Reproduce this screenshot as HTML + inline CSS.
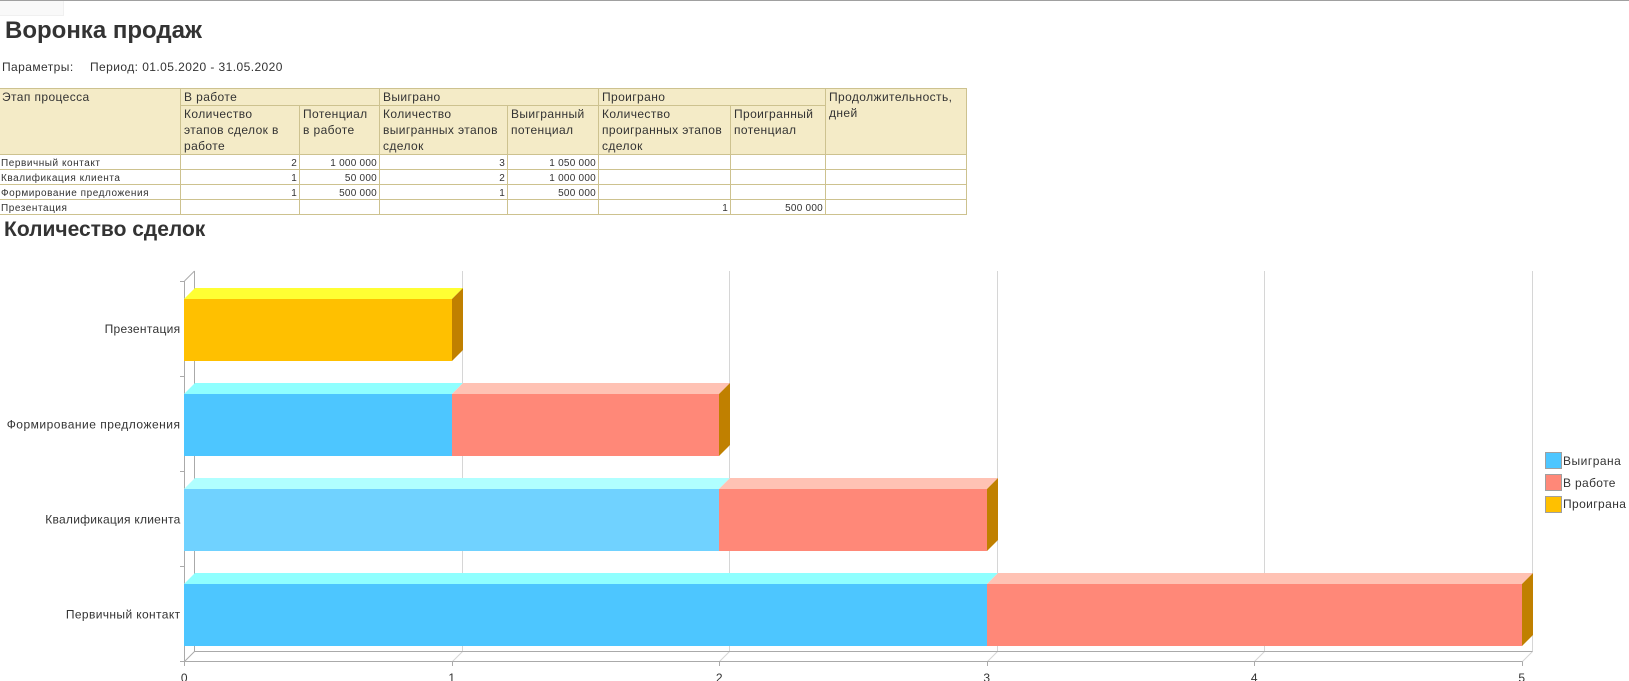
<!DOCTYPE html>
<html lang="ru"><head><meta charset="utf-8"><title>Воронка продаж</title>
<style>
html,body{margin:0;padding:0;background:#fff;width:1629px;height:681px;overflow:hidden}
body{position:relative;font-family:"Liberation Sans",Arial,sans-serif;color:#333}
.a{position:absolute;white-space:nowrap;letter-spacing:.43px}
.topline{position:absolute;left:0;top:0;width:1629px;height:1px;background:#a0a0a0}
.tab{position:absolute;left:0;top:1px;width:64px;height:15px;background:#f9f9f9;border-right:1px solid #f0f0f0;border-bottom:1px solid #f0f0f0;box-sizing:border-box}
h1{position:absolute;margin:0;left:5px;top:17px;font-size:24px;line-height:28px;font-weight:bold;color:#333;white-space:nowrap}
h2{position:absolute;margin:0;left:4px;top:218px;font-size:21px;line-height:24px;font-weight:bold;color:#333;white-space:nowrap}
table{position:absolute;left:-1px;top:88px;border-collapse:collapse;table-layout:fixed;width:967px}
td{border:1px solid #cdc28f;padding:0 3px;vertical-align:top;font-size:12px;line-height:16px;color:#333;overflow:hidden;letter-spacing:.4px;white-space:nowrap}
.h{background:#f4ebc7}
.r td{font-size:10px;height:11px;line-height:11px;padding:3px 2px 0;vertical-align:top}
.r td.n{text-align:right;font-size:10px;letter-spacing:.25px}
.r td:first-child{padding-left:1px;white-space:nowrap;letter-spacing:.55px}
svg{position:absolute;left:0;top:0}
svg text{font-family:"Liberation Sans",Arial,sans-serif;font-size:12px;fill:#333;letter-spacing:.5px}
</style></head><body>
<div class="topline"></div><div class="tab"></div>
<h1>Воронка продаж</h1>
<div class="a" style="left:2px;top:60px;font-size:12px;line-height:15px">Параметры:</div>
<div class="a" style="left:90px;top:60px;font-size:12px;line-height:15px">Период: 01.05.2020 - 31.05.2020</div>
<table>
<colgroup><col style="width:181px"><col style="width:119px"><col style="width:80px"><col style="width:128px"><col style="width:91px"><col style="width:132px"><col style="width:95px"><col style="width:141px"></colgroup>
<tr class="h"><td rowspan="2" class="h" style="padding-left:2px">Этап процесса</td><td colspan="2" class="h">В работе</td><td colspan="2" class="h">Выиграно</td><td colspan="2" class="h">Проиграно</td><td rowspan="2" class="h">Продолжительность,<br>дней</td></tr>
<tr class="h"><td class="h">Количество<br>этапов сделок в<br>работе</td><td class="h">Потенциал<br>в работе</td><td class="h">Количество<br>выигранных этапов<br>сделок</td><td class="h">Выигранный<br>потенциал</td><td class="h">Количество<br>проигранных этапов<br>сделок</td><td class="h">Проигранный<br>потенциал</td></tr>
<tr class="r"><td>Первичный контакт</td><td class="n">2</td><td class="n">1 000 000</td><td class="n">3</td><td class="n">1 050 000</td><td></td><td></td><td></td></tr>
<tr class="r"><td>Квалификация клиента</td><td class="n">1</td><td class="n">50 000</td><td class="n">2</td><td class="n">1 000 000</td><td></td><td></td><td></td></tr>
<tr class="r"><td>Формирование предложения</td><td class="n">1</td><td class="n">500 000</td><td class="n">1</td><td class="n">500 000</td><td></td><td></td><td></td></tr>
<tr class="r"><td>Презентация</td><td></td><td></td><td></td><td></td><td class="n">1</td><td class="n">500 000</td><td></td></tr>
</table>
<h2>Количество сделок</h2>
<svg width="1629" height="681" viewBox="0 0 1629 681">
<g fill="none" stroke="#d6d6d6" stroke-width="1">
<path d="M462.5 271V651.5L452.5 661.5"/><path d="M729.5 271V651.5L719.5 661.5"/><path d="M997.5 271V651.5L987.5 661.5"/><path d="M1264.5 271V651.5L1254.5 661.5"/><path d="M1532.5 271V651.5L1522.5 661.5"/>
</g>
<g fill="none" stroke="#aaaaaa" stroke-width="1">
<path d="M194.5 271V651.5H1532.5"/><path d="M184.5 281V661.5H1522.5"/><path d="M184.5 281L194.5 271"/><path d="M184.5 661.5L194.5 651.5"/>
<path d="M180 281.5H184.5M180 376.5H184.5M180 471.5H184.5M180 566.5H184.5M180 661.5H184.5"/>
<path d="M184.5 661.5V666M452.5 661.5V666M719.5 661.5V666M987.5 661.5V666M1254.5 661.5V666M1522.5 661.5V666"/>
</g>
<!-- Презентация -->
<polygon points="184,299 195,288 463,288 452,299" fill="#ffff33"/>
<rect x="184" y="299" width="268" height="62" fill="#ffc000"/>
<polygon points="452,299 463,288 463,350 452,361" fill="#c08000"/>
<!-- Формирование -->
<polygon points="184,394 195,383 463,383 452,394" fill="#8fffff"/>
<rect x="184" y="394" width="268" height="62" fill="#4dc6ff"/>
<polygon points="452,394 463,383 730,383 719,394" fill="#ffc2b4"/>
<rect x="452" y="394" width="267" height="62" fill="#ff8878"/>
<polygon points="719,394 730,383 730,445 719,456" fill="#c08000"/>
<!-- Квалификация -->
<polygon points="184,489 195,478 730,478 719,489" fill="#b0ffff"/>
<rect x="184" y="489" width="535" height="62" fill="#70d2ff"/>
<polygon points="719,489 730,478 998,478 987,489" fill="#ffc2b4"/>
<rect x="719" y="489" width="268" height="62" fill="#ff8878"/>
<polygon points="987,489 998,478 998,540 987,551" fill="#c08000"/>
<!-- Первичный -->
<polygon points="184,584 195,573 998,573 987,584" fill="#8fffff"/>
<rect x="184" y="584" width="803" height="62" fill="#4dc6ff"/>
<polygon points="987,584 998,573 1533,573 1522,584" fill="#ffc2b4"/>
<rect x="987" y="584" width="535" height="62" fill="#ff8878"/>
<polygon points="1522,584 1533,573 1533,635 1522,646" fill="#c08000"/>
<g text-anchor="end">
<text x="180.5" y="333" style="letter-spacing:.31px">Презентация</text>
<text x="180.5" y="428.5">Формирование предложения</text>
<text x="180.5" y="523.5" style="letter-spacing:.25px">Квалификация клиента</text>
<text x="180.5" y="618.5" style="letter-spacing:.38px">Первичный контакт</text>
</g>
<g text-anchor="middle">
<text x="184.5" y="682">0</text><text x="452" y="682">1</text><text x="719.5" y="682">2</text><text x="987" y="682">3</text><text x="1254.5" y="682">4</text><text x="1522" y="682">5</text>
</g>
<rect x="1545.5" y="452.5" width="16" height="16" fill="#4dc6ff" stroke="#a0a0a0"/>
<rect x="1545.5" y="474.5" width="16" height="16" fill="#ff8878" stroke="#a0a0a0"/>
<rect x="1545.5" y="496.5" width="16" height="16" fill="#ffc000" stroke="#a0a0a0"/>
<text x="1563" y="465">Выиграна</text>
<text x="1563" y="487" style="letter-spacing:.35px">В работе</text>
<text x="1563" y="508" style="letter-spacing:.4px">Проиграна</text>
</svg>
</body></html>
